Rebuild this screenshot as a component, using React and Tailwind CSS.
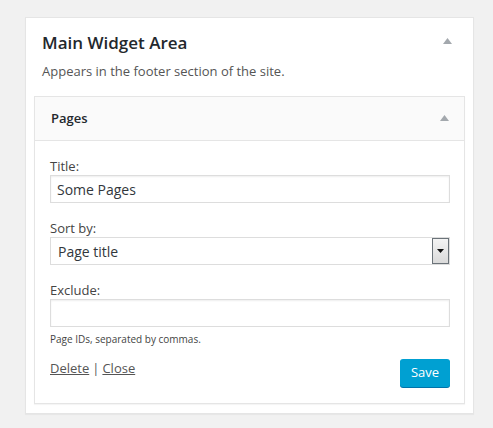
import React from "react";

function Tri({ className }) {
  return (
    <svg width="9" height="6" viewBox="0 0 9 6" className={className}>
      <polygon points="4.5,0 9,6 0,6" fill="#a3a8ad" />
    </svg>
  );
}

export default function App() {
  return (
    <div
      className="w-[493px] h-[428px] bg-[#f1f1f1] pt-[17px] pl-[25px]"
      style={{ fontFamily: '"Open Sans", "Noto Sans", sans-serif' }}
    >
      <div className="w-[449px] h-[397px] bg-white border border-[#e5e5e5] shadow-[0_1px_1px_rgba(0,0,0,0.04)]">
        <div className="flex justify-between pl-[16px] pr-[21px] pt-[13px]">
          <h2 className="text-[17px] leading-[24px] font-semibold text-[#23282d]">Main Widget Area</h2>
          <Tri className="mt-[7px]" />
        </div>
        <p className="pl-[16px] mt-[7px] text-[13px] leading-[18px] text-[#555]">
          Appears in the footer section of the site.
        </p>
        <div className="mx-[8px] mt-[16px] h-[308px] border border-[#e5e5e5] bg-white shadow-[0_1px_1px_rgba(0,0,0,0.04)]">
          <div className="h-[44px] bg-[#fafafa] border-b border-[#e5e5e5] flex items-center justify-between pl-[16px] pr-[15px]">
            <span className="text-[13px] font-semibold text-[#23282d]">Pages</span>
            <Tri className="mb-[2px]" />
          </div>
          <div className="pl-[15px] pr-[14px] pt-[16px]">
            <label className="block text-[13px] leading-[18px] text-[#444]">Title:</label>
            <div className="h-[28px] border border-[#ddd] shadow-[inset_0_1px_2px_rgba(0,0,0,0.07)] flex items-center pl-[6px] text-[14px] text-[#32373c]">
              Some Pages
            </div>
            <label className="block mt-[16px] text-[13px] leading-[18px] text-[#444]">Sort by:</label>
            <div className="h-[28px] border border-[#ddd] flex items-center justify-between pl-[7px] text-[14px] text-[#32373c]">
              <span>Page title</span>
              <div className="w-[17px] h-[26px] border border-[#6b7379] bg-gradient-to-b from-[#f4f4f4] to-[#dadada] flex items-center justify-center">
                <svg width="7" height="4" viewBox="0 0 7 4">
                  <polygon points="0,0 7,0 3.5,4" fill="#111" />
                </svg>
              </div>
            </div>
            <label className="block mt-[16px] text-[13px] leading-[18px] text-[#444]">Exclude:</label>
            <div className="h-[28px] border border-[#ddd] shadow-[inset_0_1px_2px_rgba(0,0,0,0.07)]"></div>
            <p className="mt-[6px] text-[10px] leading-[12px] text-[#444]">Page IDs, separated by commas.</p>
            <div className="mt-[14px] flex justify-between items-start">
              <div className="text-[13px] leading-[18px] text-[#555]">
                <span className="underline">Delete</span>
                <span className="mx-[3px]">|</span>
                <span className="underline">Close</span>
              </div>
              <button className="w-[50px] h-[28px] rounded-[3px] bg-[#00a0d2] text-white text-[13px] shadow-[0_1px_0_#0073aa]">
                Save
              </button>
            </div>
          </div>
        </div>
      </div>
    </div>
  );
}
